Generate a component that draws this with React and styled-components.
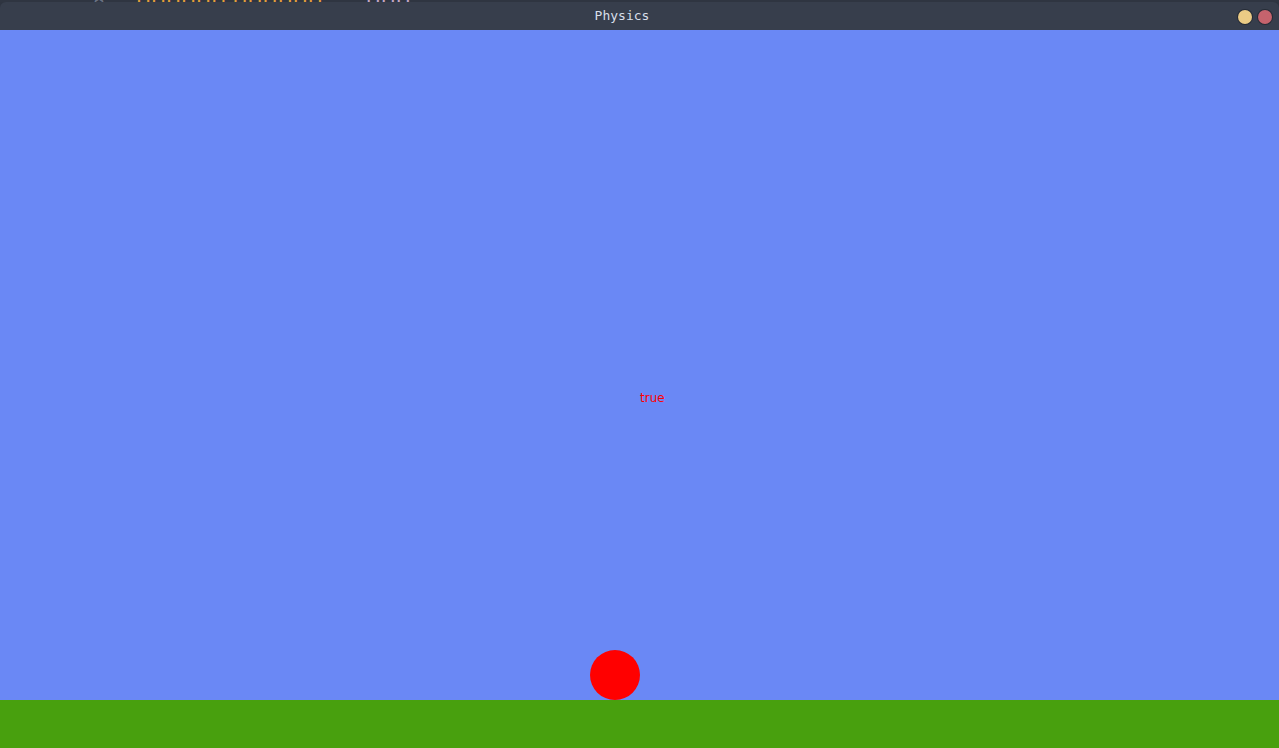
import React from "react";
import styled, { createGlobalStyle } from "styled-components";

const Global = createGlobalStyle`
  html, body { margin: 0; padding: 0; background: #2b303b; overflow: hidden; }
  #root { height: 748px; }
`;

const Page = styled.div`
  width: 1279px;
  height: 748px;
  display: flex;
  flex-direction: column;
  background: #2e3440;
`;

const BehindStrip = styled.div`
  height: 2px;
  overflow: hidden;
  display: flex;
  align-items: flex-start;
  background: #2f3541;
`;

const BehindText = styled.span`
  display: block;
  font-family: "DejaVu Sans", sans-serif;
  font-size: 20px;
  line-height: 20px;
  height: 20px;
  margin-top: -14px;
  color: ${(p) => p.$color};
  margin-left: ${(p) => p.$ml}px;
  white-space: nowrap;
`;

const Window = styled.div`
  flex: 1;
  display: flex;
  flex-direction: column;
`;

const TitleBar = styled.div`
  height: 28px;
  display: flex;
  align-items: center;
  background: #373e4c;
  border-radius: 6px 6px 0 0;
  padding-right: 7px;
`;

const Title = styled.div`
  flex: 1;
  text-align: center;
  padding-left: 6px;
  padding-bottom: 1px;
  font-family: "DejaVu Sans Mono", monospace;
  font-size: 13px;
  color: #d8dee9;
`;

const Controls = styled.div`
  display: flex;
  gap: 6px;
  padding-top: 2px;
`;

const Dot = styled.div`
  width: 14px;
  height: 14px;
  border-radius: 50%;
  background: ${(p) => p.$color};
  box-shadow: 0 0 0 1px rgba(20, 24, 32, 0.5);
`;

const Canvas = styled.div`
  position: relative;
  flex: 1;
  background: #6a88f5;
`;

const Ground = styled.div`
  height: 48px;
  background: #48a00e;
`;

const Label = styled.div`
  position: absolute;
  left: 640px;
  top: 361px;
  font-family: "DejaVu Sans", sans-serif;
  font-size: 12px;
  color: #ff0000;
`;

const Ball = styled.div`
  position: absolute;
  left: 590px;
  top: 620px;
  width: 50px;
  height: 50px;
  border-radius: 50%;
  background: #ff0000;
`;

export default function App() {
  return (
    <>
      <Global />
      <Page>
        <BehindStrip>
          <BehindText $color="#6b7384" $ml={90}>★</BehindText>
          <BehindText $color="#e5a03a" $ml={28}>HHHHHH HHHHHH</BehindText>
          <BehindText $color="#c4a6c6" $ml={43}>HHH</BehindText>
        </BehindStrip>
        <Window>
          <TitleBar>
            <Title>Physics</Title>
            <Controls>
              <Dot $color="#ebcb85" />
              <Dot $color="#c5636d" />
            </Controls>
          </TitleBar>
          <Canvas>
            <Label>true</Label>
            <Ball />
          </Canvas>
          <Ground />
        </Window>
      </Page>
    </>
  );
}
